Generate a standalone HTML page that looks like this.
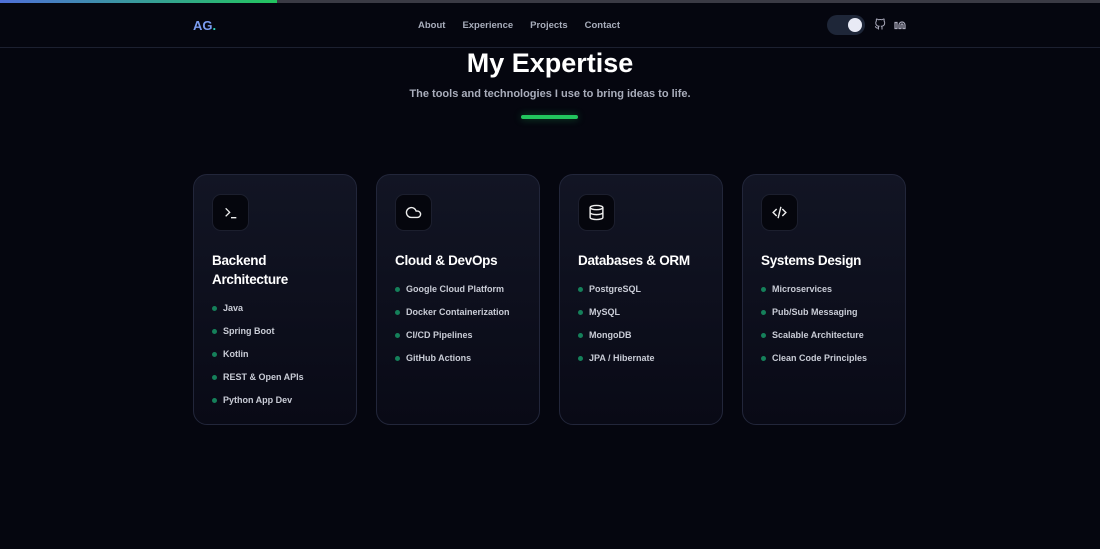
<!DOCTYPE html><html><head><style>
*{margin:0;padding:0;box-sizing:border-box}
body{width:1100px;height:549px;background:#05060f;font-family:"Liberation Sans",sans-serif;overflow:hidden;position:relative;color:#fff}
.top{position:absolute;top:0;left:0;width:1100px;height:3px;background:#3a3a44}
.prog{position:absolute;top:0;left:0;width:277px;height:3px;background:linear-gradient(90deg,#4f6fd8,#22c55e)}
.nav{position:absolute;top:3px;left:0;width:1100px;height:45px;border-bottom:1px solid #1c2030}
.logo{position:absolute;left:193px;top:15px;font-weight:bold;font-size:13px;color:#7b9cf0}
.logo span{color:#2dd4bf}
.links{position:absolute;top:17px;left:418px;font-size:9.5px;font-weight:bold;color:#a8adbb}
.links span{margin-right:17px}
.tog{position:absolute;left:827px;top:12px;width:38px;height:20px;border-radius:10px;background:#1e2638}
.tog i{position:absolute;right:3px;top:3px;width:14px;height:14px;border-radius:50%;background:#e8eaf5}
h1{position:absolute;top:48px;width:1100px;text-align:center;font-size:27px;font-weight:bold}
.sub{position:absolute;top:88px;width:1100px;text-align:center;font-size:11px;color:#a9adbb;font-weight:bold}
.bar{position:absolute;left:521px;top:115px;width:57px;height:4px;border-radius:2px;background:#22c55e;box-shadow:0 0 8px #22c55e66}
.card{position:absolute;top:174px;width:164px;height:251px;border:1px solid #22263a;border-radius:14px;background:linear-gradient(#121524,#090a16)}
.ic{position:absolute;left:18px;top:19px;width:37px;height:37px;border-radius:9px;background:#05060d;border:1px solid #1c1f2e;display:flex;align-items:center;justify-content:center}
.t{position:absolute;left:18px;top:76px;font-size:13.5px;font-weight:bold;line-height:19px;white-space:nowrap;letter-spacing:-0.3px}
ul{position:absolute;left:18px;list-style:none;font-size:9px;font-weight:bold;color:#c9ccd6}
li{height:23px;position:relative;padding-left:11px}
li:before{content:"";position:absolute;left:0;top:3px;width:5px;height:5px;border-radius:50%;background:#15805a}
</style></head><body>
<div class="top"></div><div class="prog"></div>
<div class="nav"><div class="logo">AG<span>.</span></div>
<div class="links"><span>About</span><span>Experience</span><span>Projects</span><span>Contact</span></div>
<div class="tog"><i></i></div>
<svg style="position:absolute;left:874px;top:15px" width="12" height="13" viewBox="0 0 24 24" fill="none" stroke="#aab" stroke-width="2"><path d="M9 19c-5 1.5-5-2.5-7-3m14 6v-3.9a3.4 3.4 0 0 0-1-2.6c3.1-.3 6.4-1.5 6.4-7A5.4 5.4 0 0 0 20 4.8 5 5 0 0 0 20 1s-1.2-.3-4 1.5a13.4 13.4 0 0 0-7 0C6.2.7 5 1 5 1a5 5 0 0 0-.1 3.8A5.4 5.4 0 0 0 3.5 8.5c0 5.4 3.3 6.6 6.4 7a3.4 3.4 0 0 0-1 2.6V22"/></svg>
<svg style="position:absolute;left:894px;top:15px" width="12" height="12" viewBox="0 0 24 24" fill="none" stroke="#aab" stroke-width="2.4"><path d="M16 8a6 6 0 0 1 6 6v7h-4v-7a2 2 0 0 0-4 0v7h-4v-7a6 6 0 0 1 6-6zM2 9h4v12H2z"/></svg>
</div>
<h1>My Expertise</h1>
<div class="sub">The tools and technologies I use to bring ideas to life.</div>
<div class="bar"></div>

<div class="card" style="left:193px"><div class="ic"><svg width="16" height="16" viewBox="0 0 24 24" fill="none" stroke="#eee" stroke-width="2"><path d="M4 17l6-6-6-6M12 19h8"/></svg></div>
<div class="t">Backend<br>Architecture</div>
<ul style="top:128px"><li>Java</li><li>Spring Boot</li><li>Kotlin</li><li>REST &amp; Open APIs</li><li>Python App Dev</li></ul></div>

<div class="card" style="left:376px"><div class="ic"><svg width="17" height="17" viewBox="0 0 24 24" fill="none" stroke="#eee" stroke-width="2"><path d="M17.5 19H9a7 7 0 1 1 6.7-9h1.8a4.5 4.5 0 1 1 0 9z"/></svg></div>
<div class="t">Cloud &amp; DevOps</div>
<ul style="top:109px"><li>Google Cloud Platform</li><li>Docker Containerization</li><li>CI/CD Pipelines</li><li>GitHub Actions</li></ul></div>

<div class="card" style="left:559px"><div class="ic"><svg width="17" height="17" viewBox="0 0 24 24" fill="none" stroke="#eee" stroke-width="2"><ellipse cx="12" cy="5" rx="9" ry="3"/><path d="M3 5v14c0 1.7 4 3 9 3s9-1.3 9-3V5M3 12c0 1.7 4 3 9 3s9-1.3 9-3"/></svg></div>
<div class="t">Databases &amp; ORM</div>
<ul style="top:109px"><li>PostgreSQL</li><li>MySQL</li><li>MongoDB</li><li>JPA / Hibernate</li></ul></div>

<div class="card" style="left:742px"><div class="ic"><svg width="17" height="17" viewBox="0 0 24 24" fill="none" stroke="#eee" stroke-width="2"><path d="M8 7l-5 5 5 5M16 7l5 5-5 5M14 4l-4 16"/></svg></div>
<div class="t">Systems Design</div>
<ul style="top:109px"><li>Microservices</li><li>Pub/Sub Messaging</li><li>Scalable Architecture</li><li>Clean Code Principles</li></ul></div>
</body></html>
